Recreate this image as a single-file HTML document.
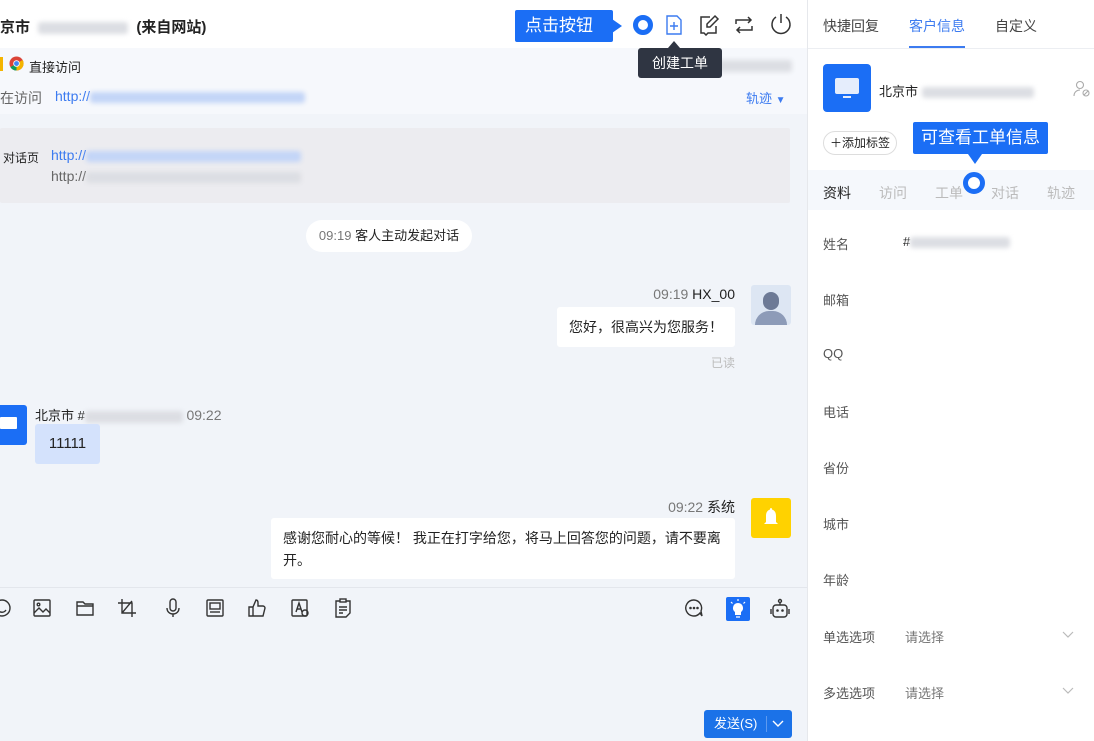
<!DOCTYPE html>
<html><head><meta charset="utf-8"><style>
*{margin:0;padding:0;box-sizing:border-box}
body{width:1094px;height:741px;overflow:hidden;font-family:"Liberation Sans","Noto Sans CJK SC",sans-serif;font-size:13px;color:#222;background:#fff;position:relative}
.a{position:absolute}
.blur{display:inline-block;background:#dcdee3;filter:blur(2.5px);border-radius:3px;vertical-align:middle}
.bl{color:#3c7bf0}
.ic{position:absolute;top:598px}
</style></head><body>
<div class="a" style="left:0;top:0;width:808px;height:741px;background:#f1f4f9"></div>
<div class="a" style="left:0;top:0;width:808px;height:48px;background:#fff"></div>
<div class="a" style="left:0;top:16px;font-size:15px;font-weight:bold">京市 <span class="blur" style="width:90px;height:12px;margin:0 4px"></span> (来自网站)</div>
<div class="a" style="left:0;top:48px;width:808px;height:66px;background:#f6f8fc"></div>
<div class="a" style="left:0;top:57px;width:3px;height:14px;background:#f4b400"></div>
<svg class="a" style="left:9px;top:56px" width="15" height="15" viewBox="0 0 16 16"><circle cx="8" cy="8" r="7.5" fill="#db4437"/><path d="M8 8 L1.5 11.8 A7.5 7.5 0 0 0 8 15.5Z" fill="#0f9d58"/><path d="M8 8 L8 15.5 A7.5 7.5 0 0 0 14.5 4.2Z" fill="#f4b400"/><circle cx="8" cy="8" r="3.5" fill="#fff"/><circle cx="8" cy="8" r="2.6" fill="#4285f4"/></svg>
<div class="a" style="left:29px;top:57px;font-size:13px">直接访问</div>
<div class="a" style="left:712px;top:57px"><span class="blur" style="width:80px;height:12px"></span></div>
<div class="a" style="left:0;top:88px;color:#666;font-size:14px">在访问</div>
<div class="a bl" style="left:55px;top:88px;font-size:14px">http://<span class="blur" style="width:215px;height:11px;background:#c3d5f7"></span></div>
<div class="a bl" style="left:746px;top:88px;font-size:13px">轨迹 <span style="font-size:10px">▼</span></div>
<div class="a" style="left:0;top:128px;width:790px;height:75px;background:#ececf0;border-radius:2px"></div>
<div class="a" style="left:3px;top:149px;font-size:12px">对话页</div>
<div class="a bl" style="left:51px;top:147px;font-size:14px">http://<span class="blur" style="width:215px;height:11px;background:#c3d5f7"></span></div>
<div class="a" style="left:51px;top:168px;font-size:14px;color:#666">http://<span class="blur" style="width:215px;height:11px"></span></div>
<div class="a" style="left:515px;top:10px;width:98px;height:32px;background:#1b6ef5;color:#fff;font-size:17px;line-height:32px;padding-left:10px;border-radius:2px">点击按钮</div>
<div class="a" style="left:612px;top:19px;width:0;height:0;border-left:10px solid #1b6ef5;border-top:7px solid transparent;border-bottom:7px solid transparent"></div>
<div class="a" style="left:633px;top:15px;width:20px;height:20px;border:5px solid #1b6ef5;border-radius:50%;background:#fff"></div>
<svg class="a" style="left:663px;top:14px" width="22" height="22" viewBox="0 0 22 22" fill="none" stroke="#3c7bf0" stroke-width="1.4"><path d="M4 2h10l4 4v14H4z"/><path d="M11 8v8M7 12h8"/></svg>
<svg class="a" style="left:698px;top:14px" width="22" height="22" viewBox="0 0 22 22" fill="none" stroke="#333" stroke-width="1.5"><path d="M12 3H3v16h3l2 2 2-2h8v-7"/><path d="M17 2l3 3-8 8H9v-3z"/></svg>
<svg class="a" style="left:733px;top:14px" width="22" height="22" viewBox="0 0 22 22" fill="none" stroke="#333" stroke-width="1.5"><path d="M3 10V6h15M15 3l3 3-3 3M19 12v4H4M7 19l-3-3 3-3"/></svg>
<svg class="a" style="left:769px;top:12px" width="24" height="24" viewBox="0 0 24 24" fill="none" stroke="#333" stroke-width="1.5"><path d="M12 2v9"/><path d="M7 5a9 9 0 1 0 10 0"/></svg>
<div class="a" style="left:638px;top:48px;width:84px;height:30px;background:#2f3542;color:#fff;font-size:14px;line-height:30px;text-align:center;border-radius:3px">创建工单</div>
<div class="a" style="left:668px;top:41px;border-bottom:7px solid #2f3542;border-left:6px solid transparent;border-right:6px solid transparent"></div>
<div class="a" style="left:306px;top:220px;width:166px;height:32px;background:#fff;border-radius:16px;line-height:32px;text-align:center;font-size:13px"><span style="color:#777">09:19</span> 客人主动发起对话</div>
<div class="a" style="left:600px;top:286px;width:135px;text-align:right;font-size:14px"><span style="color:#777">09:19</span> HX_00</div>
<div class="a" style="left:751px;top:285px;width:40px;height:40px;background:#dde6f3;border-radius:3px;overflow:hidden"><div class="a" style="left:12px;top:7px;width:16px;height:18px;border-radius:8px;background:#6d7a96"></div><div class="a" style="left:4px;top:26px;width:32px;height:20px;border-radius:14px 14px 0 0;background:#8d9bb8"></div></div>
<div class="a" style="left:557px;top:307px;width:178px;height:40px;background:#fff;border-radius:3px;line-height:40px;padding-left:12px;font-size:14px">您好，很高兴为您服务！</div>
<div class="a" style="left:711px;top:354px;color:#bbb;font-size:12px">已读</div>
<div class="a" style="left:0;top:405px;width:27px;height:40px;background:#1b6ef5;border-radius:0 3px 3px 0"></div>
<div class="a" style="left:0;top:417px;width:17px;height:12px;background:#fff;border-radius:1px"></div>
<div class="a" style="left:35px;top:405px;font-size:13px">北京市 #<span class="blur" style="width:98px;height:12px"></span> <span style="color:#777;font-size:14px">09:22</span></div>
<div class="a" style="left:35px;top:424px;width:65px;height:40px;background:#d4e2fc;border-radius:3px;line-height:40px;text-align:center;font-size:15px">11111</div>
<div class="a" style="left:600px;top:497px;width:135px;text-align:right;font-size:14px"><span style="color:#777">09:22</span> 系统</div>
<div class="a" style="left:751px;top:498px;width:40px;height:40px;background:#ffd200;border-radius:3px"><svg class="a" style="left:10px;top:9px" width="20" height="22" viewBox="0 0 20 22"><path d="M10 1c1 0 1 1 1 1.5C14 3.5 15 6 15 9v6l2 2H3l2-2V9c0-3 1-5.5 4-6.5C9 2 9 1 10 1z" fill="#fff"/></svg></div>
<div class="a" style="left:271px;top:518px;width:464px;height:61px;background:#fff;border-radius:3px;padding:9px 12px;font-size:14px;line-height:22px">感谢您耐心的等候！ 我正在打字给您，将马上回答您的问题，请不要离开。</div>
<div class="a" style="left:0;top:587px;width:808px;height:1px;background:#e3e6ec"></div>
<svg class="ic" style="left:-8px" width="20" height="20" viewBox="0 0 20 20" fill="none" stroke="#333" stroke-width="1.4"><circle cx="10" cy="10" r="8"/><path d="M6 12c2 3 6 3 8 0"/></svg>
<svg class="ic" style="left:32px" width="20" height="20" viewBox="0 0 20 20" fill="none" stroke="#333" stroke-width="1.4"><rect x="2" y="2" width="16" height="16" rx="1"/><circle cx="6.5" cy="6.5" r="1.3"/><path d="M2 15l5-5 4 4 3-3 4 4"/></svg>
<svg class="ic" style="left:75px" width="20" height="20" viewBox="0 0 20 20" fill="none" stroke="#333" stroke-width="1.4"><path d="M2 4h6l2 2h8v11H2z M2 8h16"/></svg>
<svg class="ic" style="left:117px" width="20" height="20" viewBox="0 0 20 20" fill="none" stroke="#333" stroke-width="1.4"><path d="M5 1v14h14M1 5h14v14M15 3L5 15"/></svg>
<svg class="ic" style="left:163px" width="20" height="20" viewBox="0 0 20 20" fill="none" stroke="#333" stroke-width="1.4"><rect x="7" y="1" width="6" height="12" rx="3"/><path d="M4 10c0 4 3 6 6 6s6-2 6-6M10 16v3"/></svg>
<svg class="ic" style="left:205px" width="20" height="20" viewBox="0 0 20 20" fill="none" stroke="#333" stroke-width="1.4"><rect x="2" y="2" width="16" height="16" rx="1"/><rect x="5" y="5" width="10" height="6"/><path d="M5 14h10"/></svg>
<svg class="ic" style="left:247px" width="20" height="20" viewBox="0 0 20 20" fill="none" stroke="#333" stroke-width="1.4"><path d="M2 9h4v9H2zM6 9l3-7c2 0 2 2 2 3v3h5c1 0 2 1 2 2l-2 8H6"/></svg>
<svg class="ic" style="left:290px" width="20" height="20" viewBox="0 0 20 20" fill="none" stroke="#333" stroke-width="1.4"><rect x="2" y="2" width="15" height="16" rx="1"/><path d="M6 14l3-9 3 9M7 11h4"/><circle cx="15" cy="15" r="3"/></svg>
<svg class="ic" style="left:333px" width="20" height="20" viewBox="0 0 20 20" fill="none" stroke="#333" stroke-width="1.4"><rect x="7" y="1" width="6" height="3"/><path d="M7 3H3v16h10l4-4V3h-4M6 9h8M6 12h8M6 15h4"/></svg>
<svg class="ic" style="left:684px" width="20" height="20" viewBox="0 0 20 20" fill="none" stroke="#333" stroke-width="1.4"><path d="M10 2a8 8 0 1 0 6 13l2 3-1-5A8 8 0 0 0 10 2z"/><circle cx="6.5" cy="10" r=".6" fill="#333"/><circle cx="10" cy="10" r=".6" fill="#333"/><circle cx="13.5" cy="10" r=".6" fill="#333"/></svg>
<div class="a" style="left:726px;top:597px;width:24px;height:24px;background:#1b6ef5;border-radius:2px"></div>
<svg class="a" style="left:729px;top:599px" width="18" height="20" viewBox="0 0 18 20"><path d="M9 4a5 5 0 0 0-3 9v3h6v-3a5 5 0 0 0-3-9z" fill="#fff"/><path d="M7 18h4M9 0v2M2 3l1.5 1.5M16 3l-1.5 1.5" stroke="#fff" stroke-width="1.2"/></svg>
<svg class="ic" style="left:770px" width="20" height="22" viewBox="0 0 20 22" fill="none" stroke="#333" stroke-width="1.4"><circle cx="10" cy="3" r="1.5"/><path d="M10 4.5V7"/><rect x="3" y="7" width="14" height="12" rx="3"/><path d="M1 11v5M19 11v5"/><circle cx="7.5" cy="12.5" r=".6" fill="#333"/><circle cx="12.5" cy="12.5" r=".6" fill="#333"/></svg>
<div class="a" style="left:704px;top:710px;width:88px;height:28px;background:#1b72e8;border-radius:3px;color:#fff;font-size:13px;line-height:28px;padding-left:10px">发送(S)<span class="a" style="left:62px;top:6px;width:1px;height:16px;background:#5d9af0"></span><svg class="a" style="left:68px;top:9px" width="12" height="9" viewBox="0 0 12 9" fill="none" stroke="#fff" stroke-width="1.4"><path d="M1 2l5 5 5-5"/></svg></div>
<div class="a" style="left:807px;top:0;width:1px;height:741px;background:#e6e8ec"></div>
<div class="a" style="left:808px;top:48px;width:286px;height:1px;background:#eceef2"></div>
<div class="a" style="left:823px;top:16px;font-size:14px;color:#444">快捷回复</div>
<div class="a" style="left:909px;top:16px;font-size:14px;color:#3c7bf0">客户信息</div>
<div class="a" style="left:909px;top:46px;width:56px;height:2px;background:#3c7bf0"></div>
<div class="a" style="left:995px;top:16px;font-size:14px;color:#444">自定义</div>
<div class="a" style="left:823px;top:64px;width:48px;height:48px;background:#1b6ef5;border-radius:4px"></div>
<div class="a" style="left:835px;top:78px;width:24px;height:16px;background:#e5edfc;border-radius:2px"></div>
<div class="a" style="left:843px;top:96px;width:8px;height:2px;background:#e5edfc"></div>
<div class="a" style="left:879px;top:81px;font-size:13px">北京市 <span class="blur" style="width:112px;height:11px"></span></div>
<svg class="a" style="left:1073px;top:80px" width="18" height="18" viewBox="0 0 18 18" fill="none" stroke="#aaa" stroke-width="1.1"><circle cx="7" cy="5" r="3.5"/><path d="M1 16c0-4 3-6 6-6"/><circle cx="13" cy="13" r="3"/><path d="M11 15l4-4"/></svg>
<div class="a" style="left:823px;top:131px;width:74px;height:24px;border:1px solid #ddd;border-radius:12px;font-size:12px;line-height:22px;padding-left:6px">＋添加标签</div>
<div class="a" style="left:913px;top:122px;width:135px;height:32px;background:#1b6ef5;color:#fff;font-size:17px;line-height:32px;text-align:center;border-radius:2px">可查看工单信息</div>
<div class="a" style="left:968px;top:154px;border-top:10px solid #1b6ef5;border-left:7px solid transparent;border-right:7px solid transparent"></div>
<div class="a" style="left:808px;top:170px;width:286px;height:40px;background:#f5f8fc"></div>
<div class="a" style="left:823px;top:183px;font-size:14px">资料</div>
<div class="a" style="left:879px;top:183px;font-size:14px;color:#bbb">访问</div>
<div class="a" style="left:935px;top:183px;font-size:14px;color:#bbb">工单</div>
<div class="a" style="left:991px;top:183px;font-size:14px;color:#bbb">对话</div>
<div class="a" style="left:1047px;top:183px;font-size:14px;color:#bbb">轨迹</div>
<div class="a" style="left:963px;top:172px;width:22px;height:22px;border:5px solid #1b6ef5;border-radius:50%;background:#fff"></div>
<div class="a" style="left:823px;top:234px;font-size:13px;color:#555">姓名</div>
<div class="a" style="left:903px;top:234px;font-size:13px">#<span class="blur" style="width:100px;height:11px"></span></div>
<div class="a" style="left:823px;top:290px;color:#555">邮箱</div>
<div class="a" style="left:823px;top:346px;color:#555">QQ</div>
<div class="a" style="left:823px;top:402px;color:#555">电话</div>
<div class="a" style="left:823px;top:458px;color:#555">省份</div>
<div class="a" style="left:823px;top:514px;color:#555">城市</div>
<div class="a" style="left:823px;top:570px;color:#555">年龄</div>
<div class="a" style="left:823px;top:627px;color:#555">单选选项</div>
<div class="a" style="left:905px;top:627px;color:#777">请选择</div>
<svg class="a" style="left:1062px;top:631px" width="12" height="8" viewBox="0 0 12 8" fill="none" stroke="#bbb" stroke-width="1.2"><path d="M1 1l5 5 5-5"/></svg>
<div class="a" style="left:823px;top:683px;color:#555">多选选项</div>
<div class="a" style="left:905px;top:683px;color:#777">请选择</div>
<svg class="a" style="left:1062px;top:687px" width="12" height="8" viewBox="0 0 12 8" fill="none" stroke="#bbb" stroke-width="1.2"><path d="M1 1l5 5 5-5"/></svg>
</body></html>
